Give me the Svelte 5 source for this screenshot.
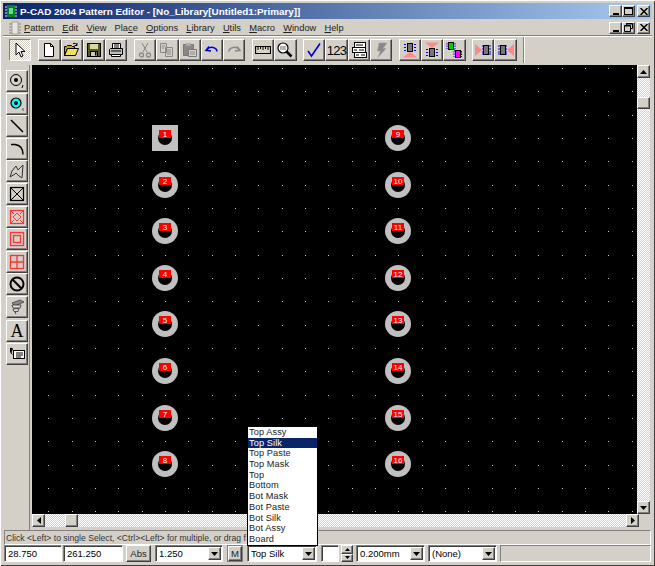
<script>
  const menus = ['Pattern', 'Edit', 'View', 'Place', 'Options', 'Library', 'Utils', 'Macro', 'Window', 'Help'];
  const underlined = { Place: 3 };
  const layers = ['Top Assy', 'Top Silk', 'Top Paste', 'Top Mask', 'Top', 'Bottom', 'Bot Mask', 'Bot Paste', 'Bot Silk', 'Bot Assy', 'Board'];

  const pitch = 23.33;
  const originX = 165 - 32;
  const originY = 138 - 65;
  const dots = [];
  for (let i = -5; i < 21; i++) {
    for (let j = -3; j < 17; j++) {
      const x = Math.round(originX + i * pitch);
      const y = Math.round(originY + j * pitch);
      if (x >= 0 && x < 605 && y >= 0 && y < 449) dots.push({ x, y });
    }
  }
  const rows = [0, 1, 2, 3, 4, 5, 6, 7];
</script>

{#snippet label(name)}
  {@const u = underlined[name] ?? 0}
  {name.slice(0, u)}<u>{name[u]}</u>{name.slice(u + 1)}
{/snippet}

{#snippet arrow()}
  <svg class="arrow" width="7" height="4" viewBox="0 0 7 4"><path d="M0 0h7L3.5 4z" fill="#000" /></svg>
{/snippet}

{#snippet combo(text, cls)}
  <div class="combo sunken {cls}">
    <span class="combo-text">{text}</span>
    <span class="raised combo-btn">{@render arrow()}</span>
  </div>
{/snippet}

<div class="window">
  <div class="titlebar">
    <svg class="app-icon" width="16" height="16" viewBox="0 0 16 16">
      <rect x="4" y="2" width="8" height="12" fill="#0b7d2c" />
      <path d="M2 4h2M2 7h2M2 10h2M2 13h2M12 4h2M12 7h2M12 10h2M12 13h2" stroke="#e8e8e8" />
      <rect x="6" y="5" width="4" height="6" fill="#5fe07a" />
    </svg>
    <span class="title">P-CAD 2004 Pattern Editor - [No_Library[Untitled1:Primary]]</span>
    <div class="caption-btns">
      <span class="raised cap"><i class="min"></i></span>
      <span class="raised cap"><i class="max"></i></span>
      <span class="raised cap close"><svg width="8" height="7" viewBox="0 0 8 7"><path d="M0.5 0L7.5 7M7.5 0L0.5 7" stroke="#000" stroke-width="1.5" /></svg></span>
    </div>
  </div>

  <div class="menubar">
    <svg class="doc-icon" width="14" height="14" viewBox="0 0 14 14">
      <rect x="4" y="1" width="6" height="12" fill="#e8e6e0" stroke="#a8a498" />
      <path d="M1 3h3M1 6h3M1 9h3M1 12h3M10 3h3M10 6h3M10 9h3M10 12h3" stroke="#8a887e" />
    </svg>
    <div class="menus">
      {#each menus as m}
        <span class="menu">{@render label(m)}</span>
      {/each}
    </div>
    <div class="caption-btns">
      <span class="raised cap"><i class="min"></i></span>
      <span class="raised cap"><svg width="9" height="9" viewBox="0 0 9 9"><path d="M2.5 2V.5h6v5H7M.5 2.5h6v6h-6z" fill="none" stroke="#000" /><path d="M2 1h7M0 3h7" stroke="#000" /></svg></span>
      <span class="raised cap close"><svg width="8" height="7" viewBox="0 0 8 7"><path d="M0.5 0L7.5 7M7.5 0L0.5 7" stroke="#000" stroke-width="1.5" /></svg></span>
    </div>
  </div>

  <div class="toolbar">
    <div class="tgroup first">
      <span class="btn pressed">
        <svg width="16" height="16" viewBox="0 0 16 16"><path d="M4 1v12l3-3 2 5 2-1-2-4.500h4z" fill="#fff" stroke="#000" /></svg>
      </span>
    </div>
    <div class="tgroup">
      <span class="btn raised"><svg width="16" height="16" viewBox="0 0 16 16"><path d="M3.500 1.500h6l3 3v10h-9z" fill="#fff" stroke="#000" /><path d="M9.500 1.500v3h3" fill="none" stroke="#000" /></svg></span>
      <span class="btn raised"><svg width="16" height="16" viewBox="0 0 16 16"><path d="M.5 13.500v-9h2l1-1h4l1 1h2v2h-7l-3 7z" fill="#c8a800" stroke="#000" /><path d="M.5 13.500l3-7h11l-3 7z" fill="#f0e060" stroke="#000" /><path d="M9 1.500q3-1 4 1.500M13 1v2.500h-2.500" fill="none" stroke="#000" /></svg></span>
      <span class="btn raised"><svg width="16" height="16" viewBox="0 0 16 16"><rect x="1.500" y="1.500" width="13" height="13" fill="#5a5a10" stroke="#000" /><rect x="4" y="2" width="8" height="5" fill="#d8d8a8" /><rect x="4.500" y="9.500" width="7" height="5" fill="#c8c8c8" stroke="#000" /><rect x="9" y="10" width="1.500" height="3.500" fill="#000" /></svg></span>
      <span class="btn raised"><svg width="16" height="16" viewBox="0 0 16 16"><path d="M4.500 1.500h8v5h-8z" fill="#fff" stroke="#000" /><path d="M2.500 6.500h12v6h-13v-5z" fill="#c0c0c0" stroke="#000" /><path d="M3.500 12.500h9v2h-9z" fill="#fff" stroke="#000" /><path d="M3 9h10" stroke="#000" /><path d="M6 3h5M6 5h5" stroke="#000" /></svg></span>
    </div>
    <div class="tgroup">
      <span class="btn raised"><svg width="16" height="16" viewBox="0 0 16 16"><path d="M5 1l5 9M11 1L6 10" stroke="#888" fill="none" /><circle cx="4.500" cy="13" r="2" fill="none" stroke="#888" stroke-width="1.300" /><circle cx="11.500" cy="13" r="2" fill="none" stroke="#888" stroke-width="1.300" /></svg></span>
      <span class="btn raised"><svg width="16" height="16" viewBox="0 0 16 16"><path d="M1.500 1.500h6v9h-6zM6.500 5.500h7v9h-7z" fill="#d4d0c8" stroke="#888" /><path d="M3 4h3M3 6h2M8 8h4M8 10h4M8 12h4" stroke="#888" /></svg></span>
      <span class="btn raised"><svg width="16" height="16" viewBox="0 0 16 16"><path d="M1.500 2.500h10v11h-10z" fill="#888" stroke="#777" /><rect x="4" y="1" width="5" height="3" fill="#aaa" /><path d="M6.500 7.500h8v7h-8z" fill="#d4d0c8" stroke="#777" /><path d="M8 10h5M8 12h5" stroke="#888" /></svg></span>
      <span class="btn raised"><svg width="16" height="16" viewBox="0 0 16 16"><path d="M5 4.500L2 8.500l5 .5M2.500 8q3-3.500 6.500-2.500 4 1 4 4" fill="none" stroke="#00c" stroke-width="1.500" /></svg></span>
      <span class="btn raised"><svg width="16" height="16" viewBox="0 0 16 16"><path d="M11 4.500L14 8.500l-5 .5M13.500 8q-3-3.500-6.500-2.500-4 1-4 4" fill="none" stroke="#888" stroke-width="1.500" /></svg></span>
    </div>
    <div class="tgroup">
      <span class="btn raised"><svg width="16" height="16" viewBox="0 0 16 16"><path d="M.5 4.500h15v7H.5z" fill="#d8d4c4" stroke="#000" stroke-width="1.200" /><path d="M3 5v3M5.500 5v2M8 5v3M10.500 5v2M13 5v3" stroke="#000" /></svg></span>
      <span class="btn raised"><svg width="16" height="16" viewBox="0 0 16 16"><circle cx="6" cy="6" r="5" fill="#fff" stroke="#000" stroke-width="1.200" /><path d="M3 5h6M3 7h6" stroke="#666" /><path d="M9.500 9.500l5 5" stroke="#000" stroke-width="2.500" /></svg></span>
    </div>
    <div class="tgroup">
      <span class="btn raised"><svg width="16" height="16" viewBox="0 0 16 16"><path d="M2 9l3.500 5L14 1.500" fill="none" stroke="#00c" stroke-width="1.600" /></svg></span>
      <span class="btn raised num">123</span>
      <span class="btn raised"><svg width="16" height="16" viewBox="0 0 16 16"><rect x="3.500" y=".5" width="11" height="5" fill="#fff" stroke="#000" /><rect x="1.500" y="5.500" width="13" height="5" fill="#fff" stroke="#000" /><rect x="3.500" y="10.500" width="12" height="5" fill="#fff" stroke="#000" /><path d="M5 3h7M3 8h3M8 8h5M5 13h3M10 13h4" stroke="#000" /></svg></span>
      <span class="btn raised"><svg width="16" height="16" viewBox="0 0 16 16"><path d="M6 1h8L10 6.500h3L5 15.500 7.500 9H4.500z" fill="#888" stroke="#a0a0a0" stroke-width=".6" /></svg></span>
    </div>
    <div class="tgroup">
      <span class="btn raised"><svg width="16" height="16" viewBox="0 0 16 16"><rect x="5.500" y="1.500" width="5" height="8" fill="#777" stroke="#000" /><path d="M3 2v1M3 5v1M3 8v1M13 2v1M13 5v1M13 8v1" stroke="#00f" stroke-width="2" /><path d="M8 10l7 5.500H1z" fill="#f88" /></svg></span>
      <span class="btn raised"><svg width="16" height="16" viewBox="0 0 16 16"><rect x="5.500" y="6.500" width="5" height="8" fill="#777" stroke="#000" /><path d="M3 7v1M3 10v1M3 13v1M13 7v1M13 10v1M13 13v1" stroke="#00f" stroke-width="2" /><path d="M8 6L15 .5H1z" fill="#f88" /></svg></span>
      <span class="btn raised"><svg width="16" height="16" viewBox="0 0 16 16"><rect x="2.500" y=".5" width="5" height="7" fill="#0c0" stroke="#000" /><rect x="9.500" y="8.500" width="5" height="7" fill="#f0f" stroke="#000" /><path d="M1 1v6M9 1v6M8 9v6M15.500 9v6" stroke="#00f" stroke-dasharray="1.500 1" /><path d="M7 7l3 2" stroke="#000" /></svg></span>
    </div>
    <div class="tgroup">
      <span class="btn raised"><svg width="16" height="16" viewBox="0 0 16 16"><path d="M0 2l7 6-7 6z" fill="#f88" /><rect x="8.500" y="3.500" width="5" height="9" fill="#777" stroke="#000" /><path d="M7 4h1M7 7h1M7 10h1M7 12h1M14 4h2M14 7h2M14 10h2M14 12h2" stroke="#00f" /></svg></span>
      <span class="btn raised"><svg width="16" height="16" viewBox="0 0 16 16"><path d="M16 2L9 8l7 6z" fill="#f88" /><rect x="2.500" y="3.500" width="5" height="9" fill="#777" stroke="#000" /><path d="M0 4h2M0 7h2M0 10h2M0 12h2M8 4h1M8 7h1M8 10h1M8 12h1" stroke="#00f" /></svg></span>
    </div>
    <div class="toolbar-end"></div>
  </div>

  <div class="workspace">
    <div class="sidebar">
      <span class="btn raised"><svg width="16" height="16" viewBox="0 0 16 16"><circle cx="7" cy="7" r="5.500" fill="none" stroke="#000" /><circle cx="7" cy="7" r="2" fill="#000" /><path d="M14 12l-1 3" stroke="#000" /></svg></span>
      <span class="btn raised"><svg width="16" height="16" viewBox="0 0 16 16"><circle cx="7" cy="7" r="5" fill="#00ffff" stroke="#000" stroke-width="1.200" /><circle cx="7" cy="7" r="2" fill="#000" /><path d="M14 12v3" stroke="#555" /></svg></span>
      <span class="btn raised"><svg width="16" height="16" viewBox="0 0 16 16"><path d="M2 2l12 12" stroke="#000" stroke-width="1.500" /></svg></span>
      <span class="btn raised"><svg width="16" height="16" viewBox="0 0 16 16"><path d="M2 3.500h4q8 1 8 10" fill="none" stroke="#000" stroke-width="1.500" /></svg></span>
      <span class="btn raised"><svg width="16" height="16" viewBox="0 0 16 16"><path d="M1 14l2-6 4-5 2 4 5-5-1 13-3-2-3-3-1 1z" fill="none" stroke="#333" /></svg></span>
      <span class="btn raised"><svg width="16" height="16" viewBox="0 0 16 16"><rect x="1.500" y="1.500" width="13" height="13" fill="none" stroke="#000" stroke-width="1.200" /><path d="M2 2l12 12M14 2L2 14" stroke="#000" /></svg></span>
      <span class="btn raised"><svg width="16" height="16" viewBox="0 0 16 16"><rect x="1.500" y="1.500" width="13" height="13" fill="none" stroke="#f33" stroke-width="1.200" /><path d="M2 2l3 3M14 2l-3 3M2 14l3-3M14 14l-3-3" stroke="#f33" /><path d="M8 4l4 4-4 4-4-4z" fill="none" stroke="#f33" /></svg></span>
      <span class="btn raised"><svg width="16" height="16" viewBox="0 0 16 16"><rect x="1.500" y="1.500" width="13" height="13" fill="none" stroke="#f33" stroke-width="1.300" /><rect x="4.500" y="4.500" width="7" height="7" fill="none" stroke="#f33" stroke-width="1.300" /></svg></span>
      <span class="btn raised"><svg width="16" height="16" viewBox="0 0 16 16"><rect x="1.500" y="1.500" width="13" height="13" fill="none" stroke="#f33" stroke-width="1.300" /><path d="M8 1v14M1 8h14" stroke="#f33" stroke-width="1.300" /></svg></span>
      <span class="btn raised"><svg width="16" height="16" viewBox="0 0 16 16"><circle cx="8" cy="8" r="6.500" fill="none" stroke="#000" stroke-width="2" /><path d="M3.500 3.500l9 9" stroke="#000" stroke-width="2" /></svg></span>
      <span class="btn raised"><svg width="16" height="16" viewBox="0 0 16 16"><path d="M3 4l8-3 4 2-9 4z" fill="#888" stroke="#333" stroke-width=".7" /><path d="M3 6h9l-1 3H4zM4 10l6-.5-1 3H5z" fill="#ddd" stroke="#333" stroke-width=".8" /><path d="M6 13l1 2" stroke="#333" /></svg></span>
      <span class="side-sep"></span>
      <span class="btn raised letter">A</span>
      <span class="btn raised"><svg width="16" height="16" viewBox="0 0 16 16"><rect x="4.500" y="4.500" width="11" height="8" fill="#fff" stroke="#000" /><path d="M7 7h7M7 9h7M7 11h5" stroke="#000" /><path d="M1 2q2-1 3 1l-1 2q-1 1 1 4-1 0-3-3z" fill="#000" /></svg></span>
    </div>

    <div class="sheet">
      <div class="canvas-row">
        <svg class="canvas" width="605" height="449" viewBox="0 0 605 449" font-family="'Liberation Sans', sans-serif">
          <rect width="605" height="449" fill="#000" />
          {#each dots as d}
            <rect x={d.x} y={d.y} width="1" height="1" fill="#c8c8c8" />
          {/each}
          {#each rows as r}
            {@const y = Math.round(73 + r * 46.6)}
            {#each [133, 366] as x, c}
              {#if c === 0 && r === 0}
                <rect x={x - 13} y={y - 13} width="26" height="26" fill="#c0c0c0" />
              {:else}
                <circle cx={x} cy={y} r="13" fill="#c0c0c0" />
              {/if}
              <circle cx={x} cy={y} r="7" fill="#000" />
              <rect x={x - 6} y={y - 8} width="12" height="8" fill="#ff0000" />
              <text x={x} y={y - 1.200} text-anchor="middle" font-size="8" fill="#fff">{r + 1 + c * 8}</text>
            {/each}
          {/each}
        </svg>
        <div class="vscroll">
          <span class="raised sb-btn"><svg width="7" height="4" viewBox="0 0 7 4"><path d="M3.500 0L7 4H0z" /></svg></span>
          <div class="track"><span class="raised vthumb"></span></div>
          <span class="raised sb-btn"><svg width="7" height="4" viewBox="0 0 7 4"><path d="M0 0h7L3.500 4z" /></svg></span>
        </div>
      </div>
      <div class="hscroll">
        <span class="raised sb-btn"><svg width="4" height="7" viewBox="0 0 4 7"><path d="M4 0v7L0 3.500z" /></svg></span>
        <div class="track row"><span class="raised hthumb"></span></div>
        <span class="raised sb-btn"><svg width="4" height="7" viewBox="0 0 4 7"><path d="M0 0v7l4-3.500z" /></svg></span>
        <span class="corner"></span>
      </div>
    </div>
  </div>

  <div class="status">Click &lt;Left&gt; to single Select, &lt;Ctrl&gt;&lt;Left&gt; for multiple, or drag f</div>

  <div class="bottom">
    <div class="field sunken x-coord">28.750</div>
    <div class="field sunken y-coord">261.250</div>
    <span class="raised text-btn abs">Abs</span>
    {@render combo('1.250', 'grid-size')}
    <span class="raised text-btn m">M</span>
    {@render combo('Top Silk', 'layer')}
    <div class="field sunken swatch"></div>
    <div class="spin">
      <span class="raised"><svg width="5" height="3" viewBox="0 0 5 3"><path d="M2.500 0L5 3H0z" /></svg></span>
      <span class="raised"><svg width="5" height="3" viewBox="0 0 5 3"><path d="M0 0h5L2.500 3z" /></svg></span>
    </div>
    {@render combo('0.200mm', 'line-width')}
    {@render combo('(None)', 'net')}
    <div class="panel"></div>
  </div>

  <ul class="popup">
    {#each layers as l}
      <li class:active={l === 'Top Silk'}>{l}</li>
    {/each}
  </ul>
</div>

<style>
  :global(body) {
    margin: 0;
    background: #d4d0c8;
  }

  .window {
    position: relative;
    width: 655px;
    height: 566px;
    box-sizing: border-box;
    padding: 3px 3px 4px;
    overflow: hidden;
    display: flex;
    flex-direction: column;
    background: #d4d0c8;
    font: 9.500px 'Liberation Sans', Arial, sans-serif;
    color: #000;
    box-shadow: inset 1px 1px 0 #fff, inset -1px -1px 0 #404040;
  }

  .raised {
    box-sizing: border-box;
    background: #d4d0c8;
    border: 1px solid;
    border-color: #fff #404040 #404040 #fff;
    box-shadow: inset -1px -1px 0 #808080;
    display: flex;
    align-items: center;
    justify-content: center;
  }

  .sunken {
    box-sizing: border-box;
    background: #fff;
    border: 1px solid;
    border-color: #808080 #fff #fff #808080;
    box-shadow: inset 1px 1px 0 #404040;
  }

  .titlebar {
    height: 16px;
    flex: none;
    display: flex;
    align-items: center;
    padding: 0 2px 0 0;
    background: linear-gradient(90deg, #0a246a, #a6caf0);
    color: #fff;
  }

  .app-icon {
    flex: none;
    margin-right: 1px;
  }

  .title {
    font-size: 9.900px;
    font-weight: bold;
    white-space: nowrap;
  }

  .caption-btns {
    margin-left: auto;
    display: flex;
  }

  .cap {
    width: 13px;
    height: 12px;
  }

  .close {
    margin-left: 2px;
  }

  .min {
    display: block;
    width: 6px;
    height: 2px;
    margin-top: 6px;
    background: #000;
  }

  .max {
    display: block;
    box-sizing: border-box;
    width: 9px;
    height: 8px;
    border: 1px solid #000;
    border-top-width: 2px;
  }

  .menubar {
    height: 15px;
    flex: none;
    margin-top: 1px;
    display: flex;
    align-items: center;
    padding: 0 2px 0 5px;
  }

  .menus {
    display: flex;
    gap: 8.200px;
    margin-left: 2px;
    color: #222;
    font-size: 9.300px;
  }

  .toolbar {
    height: 30px;
    flex: none;
    box-sizing: border-box;
    border-top: 1px solid #808080;
    box-shadow: inset 0 1px 0 #fff;
    display: flex;
    padding: 3px 0 0 6px;
  }

  .tgroup {
    display: flex;
    margin-right: 6.500px;
  }

  .tgroup.first {
    margin-right: 7px;
  }

  .toolbar-end {
    width: 2px;
    height: 26px;
    margin-top: -2px;
    border-left: 1px solid #808080;
    border-right: 1px solid #fff;
    box-sizing: border-box;
  }

  .btn {
    box-sizing: border-box;
    width: 22.300px;
    height: 22px;
    flex: none;
  }

  .pressed {
    display: flex;
    align-items: center;
    justify-content: center;
    border: 1px solid;
    border-color: #808080 #fff #fff #808080;
    background: repeating-conic-gradient(#fff 0 25%, #d4d0c8 0 50%) 0 0 / 2px 2px;
  }

  .num {
    font-size: 13px;
    letter-spacing: -0.800px;
  }

  .letter {
    font: 18px 'Liberation Serif', serif;
  }

  .workspace {
    flex: 1;
    min-height: 0;
    display: flex;
  }

  .sidebar {
    width: 27px;
    flex: none;
    box-sizing: border-box;
    padding: 5px 0 0 3px;
    display: flex;
    flex-direction: column;
    gap: 0.600px;
    border-right: 1px solid #808080;
    margin-right: 2px;
  }

  .sidebar .btn {
    width: 22px;
  }

  .side-sep {
    height: 1px;
  }

  .sheet {
    flex: 1;
    min-width: 0;
    display: flex;
    flex-direction: column;
  }

  .canvas-row {
    flex: 1;
    min-height: 0;
    display: flex;
  }

  .canvas {
    display: block;
    flex: none;
  }

  .vscroll {
    width: 13px;
    display: flex;
    flex-direction: column;
  }

  .sb-btn {
    width: 13px;
    height: 13px;
    flex: none;
  }

  .track {
    flex: 1;
    background: repeating-conic-gradient(#fff 0 25%, #d4d0c8 0 50%) 0 0 / 2px 2px;
    padding-top: 19px;
  }

  .track.row {
    display: flex;
    padding: 0 0 0 20px;
  }

  .vthumb {
    display: block;
    height: 12px;
  }

  .hthumb {
    display: block;
    width: 13px;
  }

  .hscroll {
    height: 13px;
    flex: none;
    display: flex;
    margin-bottom: 3px;
  }

  .corner {
    width: 13px;
    flex: none;
  }

  .status {
    height: 15px;
    flex: none;
    box-sizing: border-box;
    margin: 0 1px;
    padding: 1px 1px;
    line-height: 12px;
    font-size: 8.600px;
    border: 1px solid;
    border-color: #808080 #fff #fff #808080;
    color: #333;
    white-space: nowrap;
    overflow: hidden;
  }

  .bottom {
    height: 17px;
    flex: none;
    display: flex;
    align-items: stretch;
    padding-left: 1px;
  }

  .field {
    padding: 1px 3px;
    line-height: 13px;
  }

  .x-coord {
    width: 58px;
  }

  .y-coord {
    width: 60px;
    margin-left: 1px;
  }

  .swatch {
    width: 18px;
    margin-left: 4px;
  }

  .text-btn {
    color: #222;
  }

  .abs {
    width: 25px;
    margin-left: 3px;
  }

  .m {
    width: 14px;
    margin: 1px 0 1px 5px;
    outline: 1px solid #808080;
  }

  .combo {
    display: flex;
    align-items: center;
    padding: 0 1px 0 3px;
  }

  .grid-size {
    width: 68px;
    margin-left: 4px;
  }

  .layer {
    width: 70px;
    margin-left: 5px;
  }

  .line-width {
    width: 69px;
    margin-left: 3px;
  }

  .net {
    width: 69px;
    margin-left: 3px;
  }

  .combo-text {
    flex: 1;
    white-space: nowrap;
  }

  .combo-btn {
    width: 13px;
    height: 13px;
    flex: none;
  }

  .spin {
    width: 12px;
    display: flex;
    flex-direction: column;
    margin-left: 2px;
  }

  .spin span {
    height: 8.500px;
    flex: none;
  }

  .panel {
    flex: 1;
    box-sizing: border-box;
    margin-right: 1px;
    margin-left: 3px;
    border: 1px solid;
    border-color: #808080 #fff #fff #808080;
  }

  .popup {
    position: absolute;
    left: 247px;
    top: 426px;
    width: 71px;
    height: 120px;
    box-sizing: border-box;
    margin: 0;
    padding: 0;
    list-style: none;
    background: #fff;
    border: 1px solid #000;
    color: #222;
    font-size: 9.200px;
  }

  .popup li {
    height: 10.700px;
    line-height: 10.700px;
    padding-left: 1px;
    white-space: nowrap;
    letter-spacing: 0.100px;
  }

  .popup li.active {
    background: #0a246a;
    color: #fff;
  }
</style>
